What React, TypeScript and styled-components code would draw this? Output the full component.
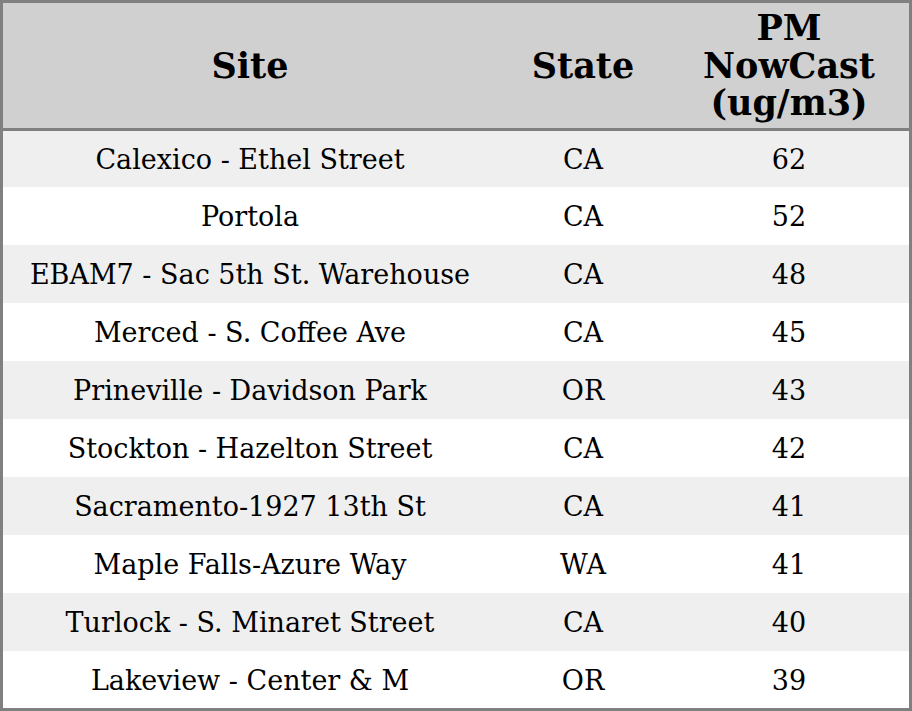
import React from "react";
import styled, { createGlobalStyle } from "styled-components";

const Global = createGlobalStyle`
  html, body { margin: 0; padding: 0; background: #ffffff; }
  body { font-family: "DejaVu Serif", serif; }
`;

const Table = styled.table`
  width: 912px;
  border-collapse: collapse;
  border: 3px solid #808080;
  font-family: "DejaVu Serif", serif;
  color: #000;
`;

const HeadCell = styled.th<{ $w: number }>`
  width: ${(p) => p.$w}px;
  height: 125px;
  padding: 0;
  background: #d0d0d0;
  border-bottom: 3px solid #808080;
  font-size: 35px;
  font-weight: bold;
  line-height: 37.5px;
  text-align: center;
  vertical-align: middle;
`;

const Row = styled.tr<{ $odd: boolean }>`
  background: ${(p) => (p.$odd ? "#efefef" : "#ffffff")};
  & > td { height: 58px; }
  &:first-child > td { height: 57.5px; }
  &:last-child > td { height: 58.5px; }
`;

const Cell = styled.td`
  padding: 2px 0 0 0;
  box-sizing: border-box;
  font-size: 27px;
  line-height: 32px;
  text-align: center;
  vertical-align: middle;
`;

const rows: [string, string, string][] = [
  ["Calexico - Ethel Street", "CA", "62"],
  ["Portola", "CA", "52"],
  ["EBAM7 - Sac 5th St. Warehouse", "CA", "48"],
  ["Merced - S. Coffee Ave", "CA", "45"],
  ["Prineville - Davidson Park", "OR", "43"],
  ["Stockton - Hazelton Street", "CA", "42"],
  ["Sacramento-1927 13th St", "CA", "41"],
  ["Maple Falls-Azure Way", "WA", "41"],
  ["Turlock - S. Minaret Street", "CA", "40"],
  ["Lakeview - Center & M", "OR", "39"],
];

export default function App() {
  return (
    <>
      <Global />
      <Table>
        <thead>
          <tr>
            <HeadCell $w={494}>Site</HeadCell>
            <HeadCell $w={172}>State</HeadCell>
            <HeadCell $w={240}>
              PM
              <br />
              NowCast
              <br />
              (ug/m3)
            </HeadCell>
          </tr>
        </thead>
        <tbody>
          {rows.map((r, i) => (
            <Row key={i} $odd={i % 2 === 0}>
              <Cell>{r[0]}</Cell>
              <Cell>{r[1]}</Cell>
              <Cell>{r[2]}</Cell>
            </Row>
          ))}
        </tbody>
      </Table>
    </>
  );
}
